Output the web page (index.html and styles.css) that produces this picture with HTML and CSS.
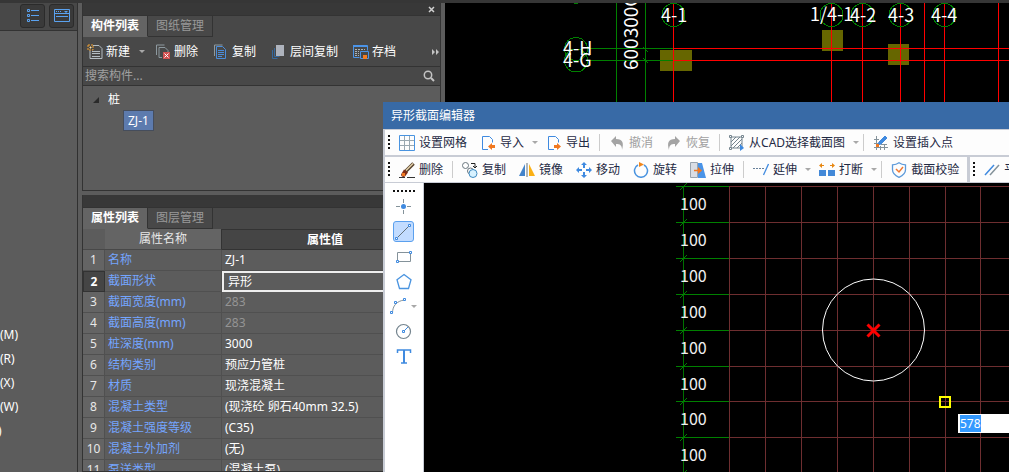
FILE: index.html
```html
<!DOCTYPE html>
<html lang="zh-CN">
<head>
<meta charset="utf-8">
<title>异形截面编辑器</title>
<link rel="stylesheet" href="styles.css">
</head>
<body>
<div class="app">
  <aside class="nav">
    <div class="nav-head">
      <button class="view-btn" aria-label="列表视图"><svg width="16" height="16" viewBox="0 0 16 16" fill="none" stroke="#5aa2f0"><path d="M2.500 1.500h2v2h-2zM2.500 6.500h2v2h-2zM2.500 11.500h2v2h-2z M6 2.500h8M6 7.500h8M6 12.500h8"/></svg></button>
      <button class="view-btn" aria-label="面板视图"><svg width="16" height="16" viewBox="0 0 16 16" fill="none" stroke="#5aa2f0"><path d="M.5 1.500h15v12h-15zM.5 5.500h15M2 8.500h12M2 3.500h1M4 3.500h1M6 3.500h1"/><path d="M10 3h4l-2 2z" fill="#5aa2f0" stroke="none"/></svg></button>
    </div>
    <ul class="nav-list"><li>(M)</li><li>(R)</li><li>(X)</li><li>(W)</li><li class="cut">)</li></ul>
  </aside>

  <div class="docks">
    <section class="panel components">
      <div class="panel-title"><button class="close" aria-label="关闭"><svg width="7" height="7" viewBox="0 0 7 7" stroke="#d0d0d0" stroke-width="1.500"><path d="M1 1l5 5M6 1l-5 5"/></svg></button></div>
      <div class="tabs"><button class="tab active">构件列表</button><button class="tab">图纸管理</button></div>
      <div class="actions">
        <button><svg width="16" height="16" viewBox="0 0 16 16" fill="none" stroke="#b3bcc2"><path d="M6 1.500h6l3 3v10h-12v-8M5 7.500h8M5 9.500h8M5 12.500h8"/><path d="M1 1h5v5h-5z" stroke="#f0a030" stroke-dasharray="2 1"/><path d="M2.500 3.500h2M3.500 2.500v2" stroke="#ffe0a0"/></svg>新建</button>
        <button class="caret" aria-label="新建选项"></button>
        <button><svg width="16" height="16" viewBox="0 0 16 16" fill="none" stroke="#8d999f"><path d="M1.500 11v-10h8M7 13.500h-3v-10h6l3 3v2"/><path d="M8 8h7v7h-7z" fill="#d25050" stroke="none"/><path d="M9.500 9.500l4 4M13.500 9.500l-4 4" stroke="#fff"/></svg>删除</button>
        <button><svg width="16" height="16" viewBox="0 0 16 16" fill="none" stroke="#4b8ddb"><path d="M1.500 12v-11h8" stroke="#8d999f"/><path d="M3.500 2.500h6l3 3v9h-9zM5 6.500h6M5 8.500h6M5 10.500h6M5 12.500h4"/></svg>复制</button>
        <button><svg width="16" height="16" viewBox="0 0 16 16" fill="none" stroke="#35699f"><path d="M1.500 6v8.500h5M3.500 4v8.500h5"/><path d="M5 1h8v11h-8z" fill="#aeb3bd" stroke="none"/></svg>层间复制</button>
        <button><svg width="16" height="16" viewBox="0 0 16 16" fill="none" stroke="#4b94e8"><path d="M.5 1.500h14v5M.5 1v12.500h6M1 2.500h13"/><path d="M2 5.500h5M2 7.500h4M2 9.500h4M2 11.500h4M8 5.500h4" stroke="#a9b4ba" stroke-dasharray="2 1"/><path d="M7.500 7.500h8v7h-8z"/><path d="M10 11h4v4h-4z" fill="#f57c20" stroke="none"/></svg>存档</button>
        <button class="more" aria-label="更多"><svg width="8" height="6" viewBox="0 0 8 6" fill="#c4c4c4"><path d="M0 0l3 3-3 3zM4 0l3 3-3 3z"/></svg></button>
      </div>
      <div class="search"><input type="text" placeholder="搜索构件..." aria-label="搜索构件"><svg width="12" height="12" viewBox="0 0 12 12" fill="none" stroke="#c4c4c4" stroke-width="1.500"><circle cx="5" cy="5" r="3.700"/><path d="M8 8l3 3" stroke-width="2"/></svg></div>
      <div class="tree">
        <div class="tree-group"><svg width="7" height="7" viewBox="0 0 7 7"><path d="M6 0v6h-6z" fill="#2a2a2a"/></svg>桩</div>
        <button class="tree-item">ZJ-1</button>
      </div>
    </section>

    <section class="panel properties">
      <div class="panel-title"></div>
      <div class="tabs"><button class="tab active">属性列表</button><button class="tab">图层管理</button></div>
      <table class="props">
        <thead><tr><th class="num"></th><th class="name">属性名称</th><th class="value">属性值</th></tr></thead>
        <tbody>
          <tr><td>1</td><td>名称</td><td>ZJ-1</td></tr>
          <tr class="current"><td>2</td><td>截面形状</td><td><input type="text" value="异形" aria-label="截面形状"></td></tr>
          <tr class="locked"><td>3</td><td>截面宽度(mm)</td><td>283</td></tr>
          <tr class="locked"><td>4</td><td>截面高度(mm)</td><td>283</td></tr>
          <tr><td>5</td><td>桩深度(mm)</td><td>3000</td></tr>
          <tr><td>6</td><td>结构类别</td><td>预应力管桩</td></tr>
          <tr><td>7</td><td>材质</td><td>现浇混凝土</td></tr>
          <tr><td>8</td><td>混凝土类型</td><td>(现浇砼 卵石40mm 32.5)</td></tr>
          <tr><td>9</td><td>混凝土强度等级</td><td>(C35)</td></tr>
          <tr><td>10</td><td>混凝土外加剂</td><td>(无)</td></tr>
          <tr><td>11</td><td>泵送类型</td><td>(混凝土泵)</td></tr>
        </tbody>
      </table>
    </section>
  </div>

  <main class="drawing">
    <svg class="canvas" shape-rendering="crispEdges">
      <g transform="translate(-445 -3)">
        <g fill="#666600"><path d="M660 50h32v21h-32zM822 30h21v21h-21zM888 44h21v21h-21z"/></g>
        <g stroke="#008000" fill="none">
          <path d="M616.500 3v470M645.500 3v470M587 48.500h86M587 60.500h86M643 47l5 5M643 58l5 5M574 3.500h4"/>
        </g>
        <g stroke="#ff0000" fill="none"><path d="M673.500 3v470M831.500 3v470M862.500 3v470M900.500 3v470M924.500 3v470M944.500 3v470M998.500 3v470M673 48.500h800M673 60.500h800"/></g>
        <g stroke="#008000" fill="none">
          <circle cx="673.500" cy="15" r="11.500"/><circle cx="831.500" cy="15" r="11.500"/><circle cx="862.500" cy="15" r="11.500"/><circle cx="900.500" cy="15" r="11.500"/><circle cx="944.500" cy="15" r="11.500"/>
          <circle cx="576" cy="49" r="11.500"/><circle cx="576" cy="60.500" r="11.500"/>
        </g>
        <g class="axis-text">
          <text x="661" y="22">4-1</text><text x="810" y="21">1/4-1</text><text x="850" y="22">4-2</text><text x="888" y="22">4-3</text><text x="931" y="22">4-4</text>
          <text x="563" y="55">4-H</text><text x="563" y="67">4-G</text>
          <text class="dim" transform="translate(638 70) rotate(-90)">600300C</text>
        </g>
      </g>
    </svg>
  </main>

  <section class="editor" role="dialog" aria-label="异形截面编辑器">
    <h1 class="editor-title">异形截面编辑器</h1>
    <div class="editor-body">
      <div class="toolbar">
        <span class="grip"></span>
        <button><svg width="16" height="16" viewBox="0 0 16 16" fill="none"><path d="M5.500 1v14M10.500 1v14M1 5.500h14M1 10.500h14" stroke="#9aa8b0"/><path d="M.5.5h15v15h-15z" stroke="#4a94e0"/></svg>设置网格</button>
        <button><svg width="16" height="16" viewBox="0 0 16 16" fill="none"><path d="M8 14.500h-5.500v-13h7l3 3v3" stroke="#3f8ae0"/><path d="M8 11.500l4-3.500v2h3v3h-3v2z" fill="#f07820"/></svg>导入</button>
        <button class="caret" aria-label="导入选项"></button>
        <button><svg width="16" height="16" viewBox="0 0 16 16" fill="none"><path d="M8 14.500h-5.500v-13h7l3 3v3" stroke="#3f8ae0"/><path d="M15 11.500l-4-3.500v2h-3v3h3v2z" fill="#f07820"/></svg>导出</button>
        <span class="sep"></span>
        <button disabled><svg width="16" height="16" viewBox="0 0 16 16" fill="#a4a4a4"><path d="M2 6l5-5v3c7 0 8 4 6 11 0-5-2-6-6-6v3z"/></svg>撤消</button>
        <button disabled><svg width="16" height="16" viewBox="0 0 16 16" fill="#a4a4a4"><path d="M14 6l-5-5v3c-7 0-8 4-6 11 0-5 2-6 6-6v3z"/></svg>恢复</button>
        <span class="sep"></span>
        <button><svg width="16" height="16" viewBox="0 0 16 16" fill="none" stroke="#74848e"><path d="M2 2h11v11h-11zM2 7l5-5M2 11l9-9M4 13l9-9M8 13l5-5" /><path d="M.5.5h2v2h-2zM12.500.5h2v2h-2zM.5 12.500h2v2h-2z" fill="#fff"/><path d="M11 9l4 4-4 3z" fill="#3f8ae0" stroke="none"/></svg>从CAD选择截面图</button>
        <button class="caret" aria-label="选择选项"></button>
        <span class="sep"></span>
        <button><svg width="16" height="16" viewBox="0 0 16 16" fill="none"><path d="M3.500 1v14M1 4.500h5M1 8.500h4M1 12.500h14M7.500 11v4M11.500 9v6M8 9.500h6" stroke="#84929a"/><path d="M12 1l2 2-6 6-3 1 1-3z" fill="#3f8ae0" stroke="#3f8ae0"/><path d="M3 9h3v3h-3z" fill="#f07820"/></svg>设置插入点</button>
      </div>
      <div class="toolbar-row">
        <div class="toolbar edit-tools">
          <span class="grip"></span>
          <button><svg width="16" height="16" viewBox="0 0 16 16" fill="none"><path d="M0 15.500h6M8 15.500h8" stroke="#333"/><path d="M14.500 1.500l-8 8" stroke="#55402c" stroke-width="3.500"/><path d="M14 1.500l-7 7" stroke="#e6d3ac" stroke-width="1.500"/><path d="M5 7.500l4 3-3 4c-2 1-4 0-4-2z" fill="#802f18"/><path d="M3 11h3v3h-3z" fill="#f07820"/></svg>删除</button>
          <span class="sep"></span>
          <button><svg width="16" height="16" viewBox="0 0 16 16" fill="#fff"><circle cx="3.500" cy="3.500" r="3" stroke="#68757d"/><circle cx="8.500" cy="9" r="3" stroke="#68757d"/><circle cx="11" cy="11.500" r="4" fill="#d7f2ff" stroke="#3f8ac0"/><path d="M9 1.500h4v4M11 4l2 2 2-2" stroke="#222" fill="none"/></svg>复制</button>
          <button><svg width="16" height="16" viewBox="0 0 16 16"><path d="M6 2v12h-6z" fill="#4384cb"/><path d="M10 2v12h6z" fill="#fbb116"/><path d="M8 1v14" stroke="#65737b"/></svg>镜像</button>
          <button><svg width="16" height="16" viewBox="0 0 16 16" fill="#3f8ae0"><path d="M8 0l3 3h-2v3h-2v-3h-2zM8 16l-3-3h2v-3h2v3h2zM0 8l3-3v2h3v2h-3v2zM16 8l-3 3v-2h-3v-2h3v-2z"/></svg>移动</button>
          <button><svg width="16" height="16" viewBox="0 0 16 16" fill="none"><path d="M11 3a6.500 6.500 0 1 1-6 0" stroke="#4a94e0" stroke-width="1.500"/><path d="M6 0l5 2.500-5 2.500z" fill="#f0861c"/></svg>旋转</button>
          <button><svg width="16" height="16" viewBox="0 0 16 16" fill="none"><path d="M.5.5h7v15h-7z" fill="#d9dde4" stroke="#9aa4ae"/><path d="M8 1h4l4 15h-8z" fill="#4a94e8"/><path d="M4 8.500h5" stroke="#f07820" stroke-width="1.500"/><path d="M8 5l4 3.500-4 3.500z" fill="#f07820"/></svg>拉伸</button>
          <span class="sep"></span>
          <button><svg width="16" height="16" viewBox="0 0 16 16" fill="none"><path d="M0 6.500h11" stroke="#68809a" stroke-dasharray="2 1"/><path d="M15.500 2l-5 11" stroke="#3f8ae0" stroke-width="1.300"/></svg>延伸</button>
          <button class="caret" aria-label="延伸选项"></button>
          <button><svg width="16" height="16" viewBox="0 0 16 16" fill="none"><path d="M0 8h7v6h-7zM9 8h7v6h-7z" fill="#4389d8"/><path d="M1 3.500h4M11 3.500h4" stroke="#e88812"/><path d="M0 3.500l3-2.500v5zM16 3.500l-3-2.500v5z" fill="#e88812"/></svg>打断</button>
          <button class="caret" aria-label="打断选项"></button>
          <span class="sep"></span>
          <button><svg width="16" height="16" viewBox="0 0 16 16" fill="none"><path d="M8 .8c2 1.500 4 2 6.500 2v5c0 4-3 6-6.500 7.500-3.500-1.500-6.500-3.500-6.500-7.500v-5c2.500 0 4.500-.5 6.500-2z" stroke="#5c9ada" stroke-width="1.300"/><path d="M5 7l3 3 4-5" stroke="#f07830" stroke-width="1.500"/></svg>截面校验</button>
        </div>
        <div class="toolbar offset-tools">
          <span class="grip"></span>
          <button><svg width="16" height="16" viewBox="0 0 16 16" fill="none" stroke-width="1.500"><path d="M1 13l9-10" stroke="#3f8ae0"/><path d="M6 13l9-10" stroke="#84929a"/></svg>平行</button>
        </div>
      </div>
      <div class="workspace">
        <div class="palette">
          <span class="grip-h"></span>
          <button aria-label="点"><svg width="19" height="19" viewBox="0 0 19 19" fill="none"><path d="M9.500 2v4M9.500 13v4M2 9.500h4M13 9.500h4" stroke="#84929a"/><circle cx="9.500" cy="9.500" r="2.500" fill="#3f8ae0"/></svg></button>
          <button class="on" aria-label="直线"><svg width="19" height="19" viewBox="0 0 19 19" fill="none"><path d="M4 15l11-11" stroke="#65737b"/><path d="M14.500 2.500h2v2h-2zM1.500 15.500h2v2h-2z" fill="#fff" stroke="#3f8ae0"/></svg></button>
          <button aria-label="矩形"><svg width="19" height="19" viewBox="0 0 19 19" fill="none"><path d="M3.500 5.500h13v9h-13z" stroke="#84929a"/><path d="M15.500 4.500h2v2h-2zM2.500 13.500h2v2h-2z" fill="#fff" stroke="#3f8ae0"/></svg></button>
          <button aria-label="多边形"><svg width="19" height="19" viewBox="0 0 19 19" fill="none"><path d="M10 2.500l7 5.300-2.500 8.700h-9l-2.500-8.700z" stroke="#4a94e0" stroke-width="1.300"/></svg></button>
          <span class="arc-tool"><button aria-label="圆弧"><svg width="19" height="19" viewBox="0 0 19 19" fill="none"><path d="M2.500 16c0-7 4-12 12-13" stroke="#84929a"/><path d="M13.500 1.500h2v2h-2zM4.500 4.500h2v2h-2zM.5 14.500h2v2h-2z" fill="#fff" stroke="#3f8ae0"/></svg></button><button class="caret" aria-label="圆弧选项"></button></span>
          <button aria-label="圆"><svg width="19" height="19" viewBox="0 0 19 19" fill="none"><circle cx="9.500" cy="9.500" r="7" stroke="#74848e" stroke-width="1.200"/><path d="M10 9l4-4" stroke="#3f8ae0"/><path d="M8.500 8.500h2v2h-2z" fill="#fff" stroke="#3f8ae0"/></svg></button>
          <button aria-label="文字"><svg width="19" height="19" viewBox="0 0 19 19" fill="none"><path d="M3.500 6v-3h13v3M7 16h6" stroke="#3f8ae0" stroke-width="1.500"/><path d="M10 3v13" stroke="#3f8ae0" stroke-width="2"/></svg></button>
        </div>
        <div class="section-view">
          <svg class="canvas">
            <defs><g id="dim"><path d="M252 3.500h53" stroke="#008000"/><path d="M256 7l7-7" stroke="#008000"/><text x="256" y="27">100</text></g></defs>
            <path d="M305.500 3v600M341.500 3v600M377.500 3v600M413.500 3v600M449.500 3v600M485.500 3v600M521.500 3v600M556.500 3v600M592.500 3v600M628.500 3v600M305 3.500h900M305 39.500h900M305 75.500h900M305 111.500h900M305 147.500h900M305 183.500h900M305 218.500h900M305 254.500h900M305 290.500h900" stroke="#6e2e30" fill="none"/>
            <path d="M259.500 3v600" stroke="#007000"/>
            <g class="dims"><use href="#dim"/><use href="#dim" y="36"/><use href="#dim" y="72"/><use href="#dim" y="108"/><use href="#dim" y="144"/><use href="#dim" y="180"/><use href="#dim" y="215"/><use href="#dim" y="251"/><use href="#dim" y="287"/></g>
            <circle cx="449.500" cy="147" r="51" fill="none" stroke="#fff"/>
            <path d="M443.500 141.500l12 12M455.500 141.500l-12 12" stroke="#f00" stroke-width="3"/>
            <path d="M516 214h10v10h-10z" fill="none" stroke="#ff0" stroke-width="2"/>
          </svg>
          <input class="length" type="text" value="578" aria-label="长度">
        </div>
      </div>
    </div>
  </section>
</div>
<script src="main.js"></script>
</body>
</html>
```
FILE: styles.css
```css
* { box-sizing: border-box; }

body {
  margin: 0;
  background: #5c5c5c;
  color: #fff;
  font: 12px/16px "Noto Sans", "Noto Sans CJK SC", sans-serif;
  overflow: hidden;
}

button, input {
  margin: 0;
  padding: 0;
  border: 0;
  border-radius: 0;
  background: none;
  color: inherit;
  font: inherit;
  outline: none;
}

button { white-space: nowrap; }
svg { display: block; flex: none; }

.app {
  position: relative;
  display: flex;
  height: 100vh;
  border-top: 3px solid #363636;
  overflow: hidden;
}

/* Left navigation */
.nav { flex: none; width: 78px; border-right: 1px solid #303030; }
.nav-head {
  display: flex;
  justify-content: flex-end;
  gap: 4px;
  height: 28px;
  padding: 1px 3px 2px 0;
  background: #484848;
  border-bottom: 1px solid #333;
}
.view-btn {
  display: flex;
  align-items: center;
  justify-content: center;
  width: 25px;
  height: 24px;
  background: #3a3a3a;
  border: 1px solid #2b2b2b;
  border-radius: 3px;
}
.nav-list { list-style: none; margin: 0; padding: 292px 0 0; line-height: 24px; }
.nav-list .cut { text-indent: -2px; }

/* Docked panels */
.docks { flex: none; display: flex; flex-direction: column; gap: 4px; width: 367px; padding: 0 4px; }
.panel { display: flex; flex-direction: column; border: 1px solid #333; border-top: 0; }
.components { flex: none; height: 188px; }
.properties { flex: 1; min-height: 0; overflow: hidden; }
.panel-title { flex: none; display: flex; justify-content: flex-end; height: 12px; padding: 3px 5px 0 0; background: #383838; }
.close { display: flex; }
.tabs { flex: none; display: flex; height: 22px; background: #484848; border-top: 1px solid #333; }
.tab { padding: 0 8px; background: #484848; border-right: 1px solid #333; border-bottom: 1px solid #333; color: #999; }
.tab.active { background: #646464; border-bottom-color: #646464; color: #fff; font-weight: 700; }

.actions { flex: none; display: flex; align-items: center; gap: 15px; height: 30px; padding: 0 0 0 4px; background: #484848; border-bottom: 1px solid #333; }
.actions button { display: flex; align-items: center; gap: 3px; }
.actions .caret { margin: 0 -6px 0 -7px; }
.actions .more { margin-left: auto; }

.caret { flex: none; display: flex; justify-content: center; width: 8px; }
.caret::before { content: ""; border: 3px solid transparent; border-top-color: #a8a8a8; border-bottom-width: 0; }

.search { flex: none; display: flex; align-items: center; height: 19px; padding: 0 5px 0 2px; background: #484848; border-bottom: 1px solid #333; }
.search input { flex: 1; min-width: 0; }
.search input::placeholder { color: #a0a0a0; opacity: 1; }

.tree { padding: 4px 10px; }
.tree-group { display: flex; align-items: center; gap: 8px; height: 20px; }
.tree-item { margin-left: 30px; height: 21px; padding: 0 4px; background: #5d7bae; border: 1px solid #454d5c; }

.props { width: 100%; border-collapse: separate; border-spacing: 0; table-layout: fixed; }
.props th { height: 21px; padding: 0; font-weight: 400; background: #646464; border-bottom: 1px solid #484848; color: #e8e8e8; }
.props .num { width: 22px; background: #5c5c5c; }
.props .name { width: 117px; border-right: 1px solid #333; }
.props .value { padding-right: 12px; background: #454545; color: #fff; font-weight: 700; border-bottom-color: #333; border-top: 1px solid #333; }
.props td { height: 21px; padding: 0 3px; border-bottom: 1px solid #505050; border-right: 1px solid #505050; white-space: nowrap; }
.props td:first-child { padding: 0; background: #646464; text-align: center; color: #e8e8e8; }
.props td:nth-child(2) { color: #74a5ff; }
.props .locked td:last-child { color: #949494; }
.props .current td:first-child { background: #454545; color: #fff; font-weight: 700; border: 1px solid #333; }
.props .current td:last-child { padding: 0 4px; border: 2px solid #eee; }
.props input { display: block; width: 100%; height: 16px; }

/* Drawing behind the editor */
.drawing { flex: 1; min-width: 0; background: #000; }
.canvas { width: 100%; height: 100%; fill: none; }
.axis-text { fill: #fff; font: 18px "Noto Sans CJK SC", sans-serif; }
.dim { font-size: 19px; }

/* Section editor window */
.editor { position: absolute; left: 383px; top: 99px; right: 0; bottom: 0; display: flex; flex-direction: column; color: #1f2a44; }
.editor-title { flex: none; margin: 0; height: 27px; padding-left: 8px; background: #386aa6; color: #fff; font: inherit; line-height: 27px; }
.editor-body { flex: 1; min-height: 0; display: flex; flex-direction: column; padding-left: 2px; border-top: 1px solid #c8ccd5; background: #c8ccd5; overflow: hidden; }
.toolbar { flex: none; display: flex; align-items: center; gap: 1px; height: 25px; padding-left: 3px; background: #fdfdfd; overflow: hidden; }
.toolbar button { flex: none; display: flex; align-items: center; gap: 4px; height: 100%; padding: 0 6px; }
.toolbar button:disabled { color: #a0a0a0; }
.toolbar .caret { padding: 0; }
.toolbar-row { flex: none; display: flex; gap: 3px; margin-top: 2px; }
.edit-tools { padding-right: 2px; }
.offset-tools { flex: 1; min-width: 0; }
.sep { flex: none; width: 1px; height: 17px; margin: 0 2px; background: #ccc; }
.grip { flex: none; width: 3px; height: 15px; margin-right: 1px; background: repeating-linear-gradient(#111 0 2px, transparent 2px 4px); border-right: 1px solid #fdfdfd; }

.workspace { flex: 1; min-height: 0; display: flex; margin-top: 1px; }
.palette { flex: none; display: flex; flex-direction: column; align-items: center; gap: 4px; width: 39px; padding: 7px 1px 0 0; background: #fff; border-right: 1px solid #c8ccd5; }
.grip-h { flex: none; width: 22px; height: 2px; background: repeating-linear-gradient(90deg, #111 0 2px, transparent 2px 4px); }
.palette button { flex: none; display: flex; align-items: center; justify-content: center; width: 21px; height: 21px; border: 1px solid transparent; border-radius: 3px; }
.palette .on { background: #c2dcff; border-color: #5ba0ee; }
.arc-tool { display: flex; align-items: center; }
.palette .caret { width: 8px; height: 6px; }

.section-view { position: relative; flex: 1; min-width: 0; background: #000; overflow: hidden; }
.dims { fill: #f0f0f0; font: 16px "Noto Sans CJK SC", sans-serif; }
.length { position: absolute; left: 534px; top: 231px; right: 0; height: 19px; padding-left: 2px; background: #fff; color: #1f2a44; }
.length::selection { background: #3399ff; color: #fff; }
```
FILE: main.js
```js
document.querySelector(".length").select();
```
